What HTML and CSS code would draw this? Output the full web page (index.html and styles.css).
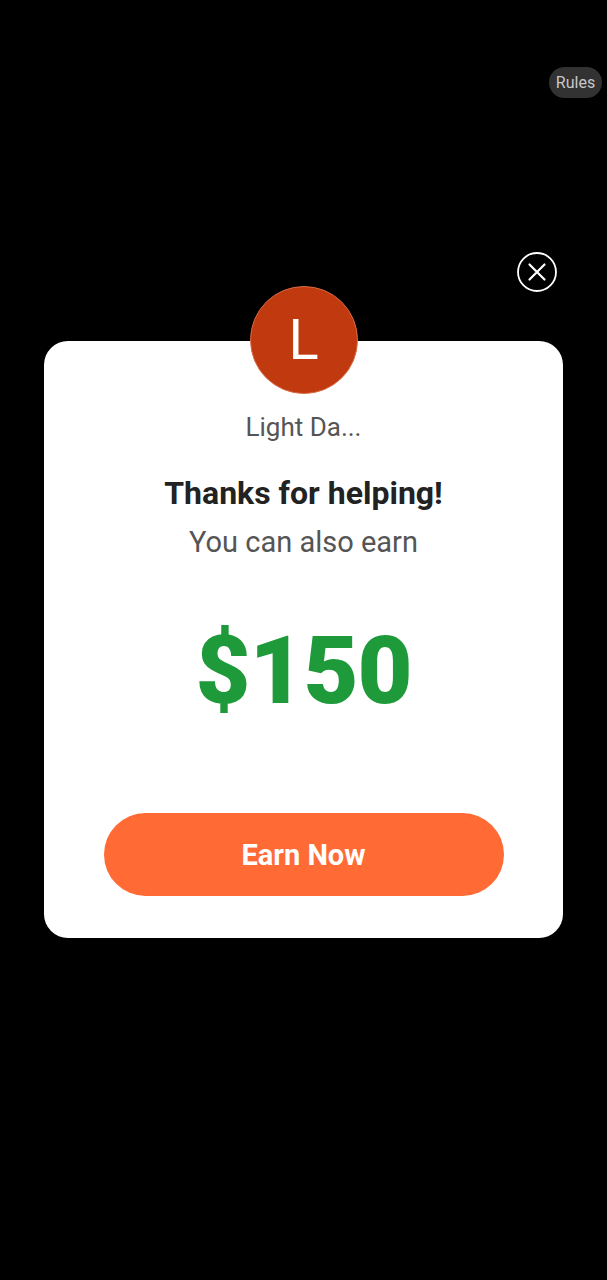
FILE: index.html
```html
<!DOCTYPE html>
<html lang="en">
<head>
<meta charset="UTF-8">
<meta name="viewport" content="width=device-width, initial-scale=1.0">
<title>Thanks for helping</title>
<link rel="stylesheet" href="styles.css">
</head>
<body>

<div class="topbar">
  <span class="rules">Rules</span>
</div>

<div class="close-row">
  <button class="close-btn" aria-label="Close">
    <svg width="40" height="40" viewBox="0 0 40 40">
      <circle cx="20" cy="20" r="19" fill="none" stroke="#fff" stroke-width="1.8"/>
      <path d="M12.5 12.5 L27.5 27.5 M27.5 12.5 L12.5 27.5" stroke="#fff" stroke-width="2.2" stroke-linecap="round"/>
    </svg>
  </button>
</div>

<div class="card">
  <div class="avatar">L</div>
  <div class="name">Light Da...</div>
  <h2 class="title">Thanks for helping!</h2>
  <p class="subtitle">You can also earn</p>
  <div class="amount">$150</div>
  <button class="earn-btn">Earn Now</button>
</div>

</body>
</html>
```

FILE: styles.css
```css
body {
  margin: 0;
  background: #000;
  font-family: Roboto, "Noto Sans", Arial, sans-serif;
  min-height: 1280px;
}

.topbar {
  display: flex;
  justify-content: flex-end;
  padding: 67px 5px 0 0;
}

.rules {
  display: inline-flex;
  align-items: center;
  justify-content: center;
  width: 53px;
  height: 31px;
  border-radius: 16px;
  background: #323232;
  color: #c8c8c8;
  font-size: 16px;
}

.close-row {
  display: flex;
  justify-content: flex-end;
  padding: 154px 50px 0 0;
}

.close-btn {
  width: 40px;
  height: 40px;
  padding: 0;
  border: none;
  background: none;
  cursor: pointer;
}

.close-btn svg {
  display: block;
}

.card {
  margin: 49px 44px 0 44px;
  background: #fff;
  border-radius: 24px;
  display: flex;
  flex-direction: column;
  align-items: center;
  padding-bottom: 42px;
}

.avatar {
  width: 106px;
  height: 106px;
  margin-top: -55px;
  border-radius: 50%;
  background: #c1390f;
  border: 1px solid #d96a45;
  color: #fff;
  font-size: 56px;
  display: flex;
  align-items: center;
  justify-content: center;
}

.name {
  margin-top: 17px;
  font-size: 26px;
  line-height: 32px;
  color: #555;
}

.title {
  margin: 32px 0 0 0;
  font-size: 32px;
  line-height: 36px;
  font-weight: 700;
  color: #222;
}

.subtitle {
  margin: 14px 0 0 0;
  font-size: 29px;
  line-height: 34px;
  color: #555;
}

.amount {
  margin-top: 61px;
  font-size: 95px;
  line-height: 102px;
  font-weight: 900;
  letter-spacing: -1px;
  color: #1e9a3a;
}

.earn-btn {
  margin-top: 91px;
  width: 400px;
  height: 83px;
  border: none;
  border-radius: 42px;
  background: #ff6a35;
  color: #fff;
  font-family: inherit;
  font-size: 29px;
  font-weight: 700;
  cursor: pointer;
}
```
